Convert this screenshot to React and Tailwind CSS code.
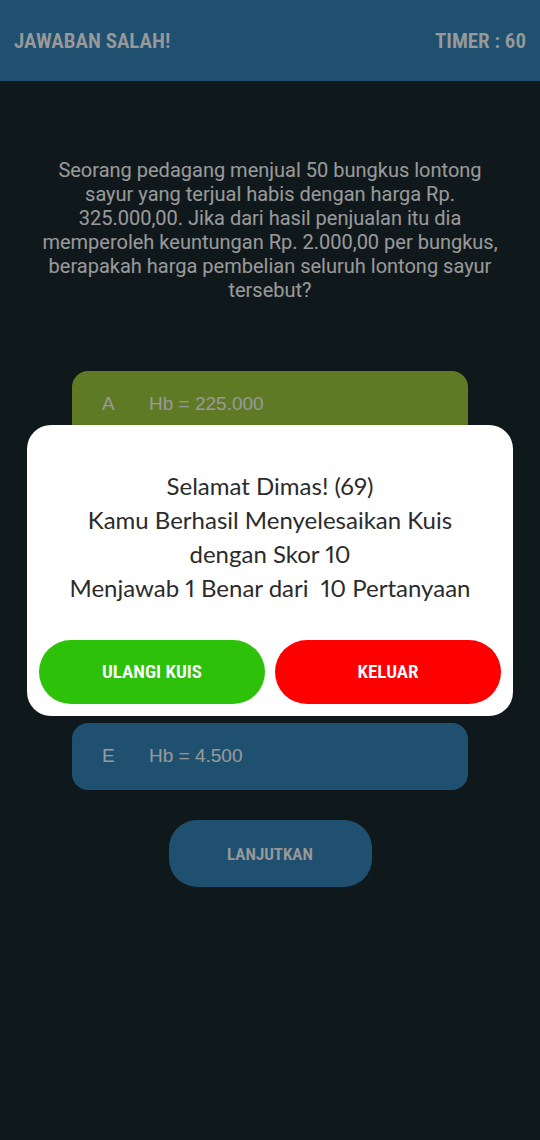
const options = [
  { letter: "A", text: "Hb = 225.000", correct: true },
  { letter: "B" },
  { letter: "C" },
  { letter: "D" },
  { letter: "E", text: "Hb = 4.500" },
];

function Option({ letter, text, correct }) {
  return (
    <button
      type="button"
      aria-label={text ? undefined : letter}
      className={`flex h-[67px] w-full items-center rounded-2xl pl-[30px] text-left font-['Liberation_Sans',sans-serif] text-[19px] ${
        correct ? "bg-[#9ecb3f]" : "bg-[#3485bb]"
      }`}
    >
      {text && (
        <>
          <span className="w-[47px]">{letter}</span>
          <span>{text}</span>
        </>
      )}
    </button>
  );
}

function ResultDialog() {
  return (
    <div className="fixed inset-0 flex items-center justify-center bg-black/40 px-[27px]">
      <div
        role="dialog"
        aria-modal="true"
        aria-labelledby="result-message"
        className="w-full rounded-3xl bg-white px-3 pt-11 pb-3"
      >
        <p
          id="result-message"
          className="text-center font-[Lato,sans-serif] text-[24px] leading-[34px] whitespace-pre-line text-[#2b2b2b] proportional-nums"
        >
          {"Selamat Dimas! (69)\nKamu Berhasil Menyelesaikan Kuis\ndengan Skor 10\nMenjawab 1 Benar dari \u00a010 Pertanyaan"}
        </p>
        <div className="mt-[35px] grid grid-cols-2 gap-[10px] font-['Roboto_Condensed',Roboto,sans-serif] text-[19px] font-semibold text-white">
          <button type="button" className="h-16 rounded-full bg-[#2ec10a] pt-[2px]">
            ULANGI KUIS
          </button>
          <button type="button" className="h-16 rounded-full bg-[#ff0000] pt-[2px]">
            KELUAR
          </button>
        </div>
      </div>
    </div>
  );
}

export default function App() {
  return (
    <div className="flex min-h-screen flex-col bg-[#1a282e] text-white">
      <header className="flex h-[81px] items-center justify-between bg-[#3485bb] px-[14px] pt-[2px] font-['Roboto_Condensed',Roboto,sans-serif] text-[21px] font-semibold">
        <h1>JAWABAN SALAH!</h1>
        <p>TIMER : 60</p>
      </header>
      <main className="flex flex-col items-center">
        <p className="mt-[77px] px-9 text-center font-[Roboto,sans-serif] text-[20px] leading-[24px]">
          Seorang pedagang menjual 50 bungkus lontong sayur yang terjual habis
          dengan harga Rp. 325.000,00. Jika dari hasil penjualan itu dia
          memperoleh keuntungan Rp. 2.000,00 per bungkus, berapakah harga
          pembelian seluruh lontong sayur tersebut?
        </p>
        <div className="mt-[69px] flex w-full flex-col gap-[21px] px-[72px]">
          {options.map((option) => (
            <Option key={option.letter} {...option} />
          ))}
        </div>
        <button
          type="button"
          className="mt-[30px] h-[67px] w-[203px] rounded-[28px] bg-[#3485bb] pt-[2px] font-['Roboto_Condensed',Roboto,sans-serif] text-[17px] font-semibold"
        >
          LANJUTKAN
        </button>
      </main>
      <ResultDialog />
    </div>
  );
}
